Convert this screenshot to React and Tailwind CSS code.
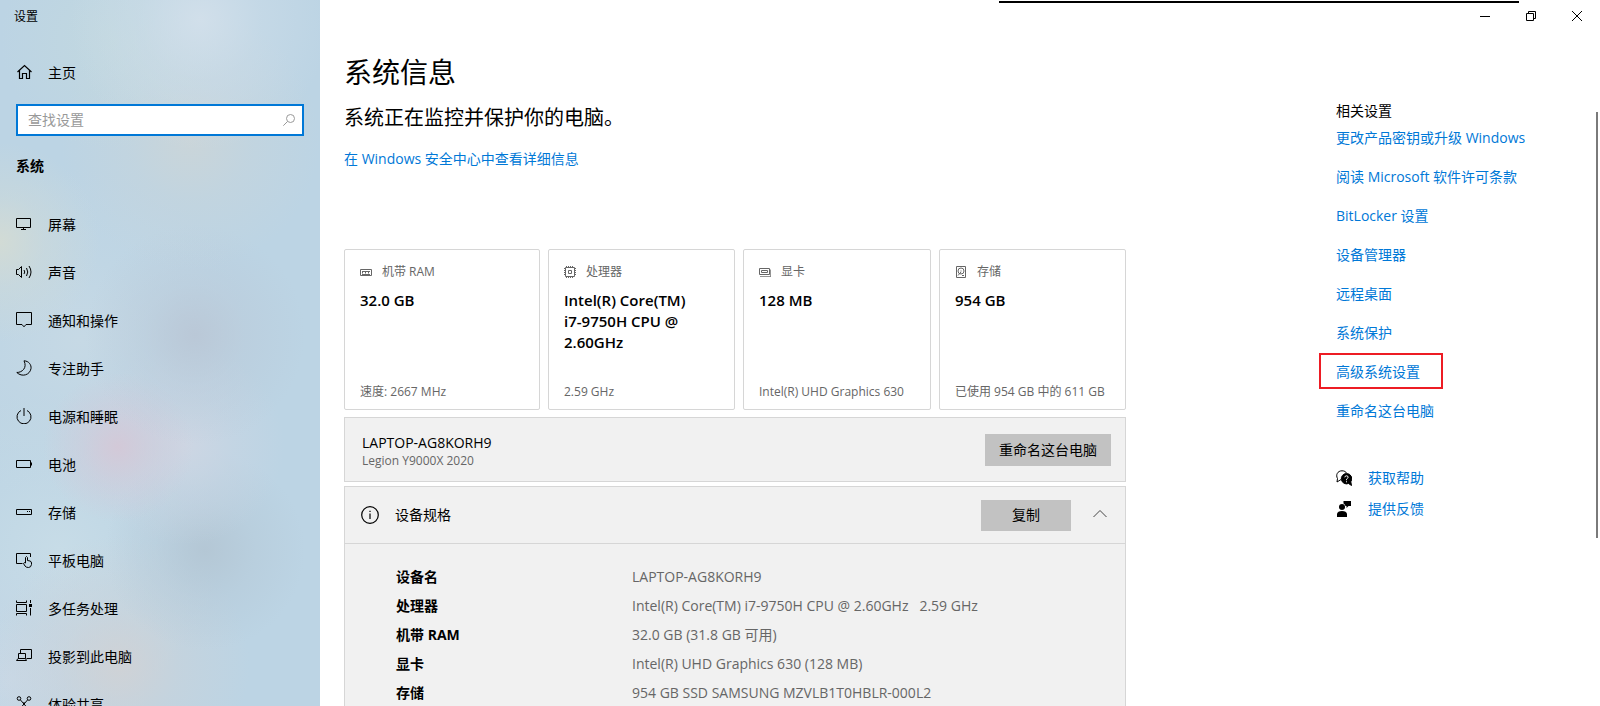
const navItems = [
  { label: "屏幕", icon: DisplayIcon },
  { label: "声音", icon: SoundIcon },
  { label: "通知和操作", icon: NoticeIcon },
  { label: "专注助手", icon: MoonIcon },
  { label: "电源和睡眠", icon: PowerIcon },
  { label: "电池", icon: BatteryIcon },
  { label: "存储", icon: StorageIcon },
  { label: "平板电脑", icon: TabletIcon },
  { label: "多任务处理", icon: MultitaskIcon },
  { label: "投影到此电脑", icon: ProjectIcon },
  { label: "体验共享", icon: ShareIcon },
];

const cards = [
  { title: "机带 RAM", value: "32.0 GB", note: "速度: 2667 MHz", icon: RamIcon },
  { title: "处理器", value: "Intel(R) Core(TM)\ni7-9750H CPU @\n2.60GHz", note: "2.59 GHz", icon: CpuIcon },
  { title: "显卡", value: "128 MB", note: "Intel(R) UHD Graphics 630", icon: GpuIcon },
  { title: "存储", value: "954 GB", note: "已使用 954 GB 中的 611 GB", icon: DiskIcon },
];

const specs = [
  ["设备名", "LAPTOP-AG8KORH9"],
  ["处理器", "Intel(R) Core(TM) i7-9750H CPU @ 2.60GHz   2.59 GHz"],
  ["机带 RAM", "32.0 GB (31.8 GB 可用)"],
  ["显卡", "Intel(R) UHD Graphics 630 (128 MB)"],
  ["存储", "954 GB SSD SAMSUNG MZVLB1T0HBLR-000L2"],
];

const related = [
  "更改产品密钥或升级 Windows",
  "阅读 Microsoft 软件许可条款",
  "BitLocker 设置",
  "设备管理器",
  "远程桌面",
  "系统保护",
  "高级系统设置",
  "重命名这台电脑",
];

function Icon({ children, size = "size-4", box = "0 0 16 16" }) {
  return (
    <svg viewBox={box} className={`${size} shrink-0`} fill="none" stroke="currentColor" strokeWidth="1" aria-hidden="true">
      {children}
    </svg>
  );
}

function HomeIcon() {
  return (
    <Icon>
      <path d="M1.5 8 L8.5 1.5 L15.5 8 M3.5 6.5 V14.5 H6.5 V9.5 H10.5 V14.5 H13.5 V6.5" strokeWidth="1.2" />
    </Icon>
  );
}

function DisplayIcon() {
  return (
    <Icon>
      <path d="M.5 2.5 H14.5 V11.5 H.5 Z M7.5 11.5 V13.5 M5 13.5 H10" />
    </Icon>
  );
}

function SoundIcon() {
  return (
    <Icon>
      <path d="M.5 5.5 H2.5 L5.5 2.5 V13.5 L2.5 10.5 H.5 Z" />
      <path d="M8 6 Q9.5 8 8 10 M10.5 4 Q13 8 10.5 12 M13 2 Q17 8 13 14" />
    </Icon>
  );
}

function NoticeIcon() {
  return (
    <Icon>
      <path d="M.5 .5 H15.5 V12.5 H10 L8 14.8 L6 12.5 H.5 Z" />
    </Icon>
  );
}

function MoonIcon() {
  return (
    <Icon>
      <path d="M8 .8 C13 1 15.5 5 15 8.5 C14 15 6 17.5 .8 12.5 C6 12.5 11.5 8 8 .8 Z" />
    </Icon>
  );
}

function PowerIcon() {
  return (
    <Icon>
      <path d="M8 0 V8 M5 2.5 A7 7 0 1 0 11 2.5" />
    </Icon>
  );
}

function BatteryIcon() {
  return (
    <Icon>
      <path d="M.5 4.5 H14.5 V11.5 H.5 Z M15.5 6.5 V9.5" />
    </Icon>
  );
}

function StorageIcon() {
  return (
    <Icon>
      <path d="M.5 5.5 H15.5 V10.5 H.5 Z M11 7.5 H12 M13 7.5 H14" />
    </Icon>
  );
}

function TabletIcon() {
  return (
    <Icon>
      <path d="M6.5 11.5 H.5 V1.5 H14.5 V5" />
      <path d="M9.5 11 V5.5 Q10.5 3.5 11.5 5.5 V8.5 L14 9 Q15.5 9.5 15.5 11 V12.5 Q15 15.5 12.5 15.5 Q10 15.5 9 14 L7.5 11.5 Q8 10 9.5 11 Z" />
    </Icon>
  );
}

function MultitaskIcon() {
  return (
    <Icon>
      <path d="M.5 4.5 H10.5 V11.5 H.5 Z M.5 .5 V2.5 H10.5 V.5 M.5 15.5 V13.5 H10.5 V15.5 M14.5 0 V3 M14.5 8 V15.5" />
      <path d="M13 5.5 H16" strokeWidth="3" />
    </Icon>
  );
}

function ProjectIcon() {
  return (
    <Icon>
      <path d="M4.5 5 V1.5 H15.5 V10.5 H10.5 M2.5 10.5 V5.5 H9.5 V10.5 M.5 12.5 L2 10.5 H9.5 L10.5 12.5 Z" />
    </Icon>
  );
}

function ShareIcon() {
  return (
    <Icon>
      <path d="M4.5 4 L11 11.5 M11.5 4 L5 11.5" />
      <circle cx="3" cy="2.5" r="1.8" />
      <circle cx="13" cy="2.5" r="1.8" />
      <circle cx="3" cy="13" r="1.8" />
      <circle cx="13" cy="13" r="1.8" />
      <path d="M7 7.5 H9" strokeWidth="2" />
    </Icon>
  );
}

function SearchIcon() {
  return (
    <Icon size="size-3" box="0 0 12 12">
      <circle cx="7.5" cy="4.5" r="4" />
      <path d="M4.5 7.5 L.3 11.7" />
    </Icon>
  );
}

function RamIcon() {
  return (
    <Icon size="size-3" box="0 0 12 12">
      <path d="M.5 3.5 H11.5 V9.5 H.5 Z M2 5.5 H10 M2.5 5 V7.5 M5.5 5 V7.5 M8.5 5 V7.5 M2 8.5 H10" />
    </Icon>
  );
}

function CpuIcon() {
  return (
    <Icon size="size-3" box="0 0 12 12">
      <path d="M1.5 1.5 H10.5 V10.5 H1.5 Z M4.5 4.5 H7.5 V7.5 H4.5 Z" />
      <path d="M2 .5 H10 M2 11.5 H10 M.5 2 V10 M11.5 2 V10" strokeDasharray="1 1" />
    </Icon>
  );
}

function GpuIcon() {
  return (
    <Icon size="size-3" box="0 0 12 12">
      <path d="M.5 2.5 H10.5 V8.5 H.5 Z M2.5 4.5 H8.5 V6.5 H2.5 Z" />
      <path d="M11.5 3.5 V10.5 M1 10.5 H12" strokeOpacity=".7" />
    </Icon>
  );
}

function DiskIcon() {
  return (
    <Icon size="size-3" box="0 0 12 12">
      <path d="M1.5 .5 H10.5 V11.5 H1.5 Z M3 9.5 L6 6" />
      <circle cx="6" cy="5" r="3" />
      <path d="M5.5 5 H6.5 M7 9.5 H9" />
    </Icon>
  );
}

function InfoIcon() {
  return (
    <Icon size="size-[18px]" box="0 0 18 18">
      <circle cx="9" cy="9" r="8.3" strokeWidth="1.2" />
      <path d="M9 7.5 V13 M9 4.8 V6" strokeWidth="1.2" />
    </Icon>
  );
}

function HelpIcon() {
  return (
    <Icon>
      <path d="M5 9.5 L1 12 L1.500 8.500 C-.5 5 1.5 .8 6 .8 C8.5 .8 9.8 1.8 10.5 3" />
      <path d="M10.5 3.5 A5.2 5.2 0 1 0 12.5 13.5 L15.5 15.5 L14.8 11.8 A5.2 5.2 0 0 0 10.5 3.5 Z" fill="currentColor" />
      <path d="M8.8 7.3 Q9 5.8 10.5 5.8 Q12.2 5.9 12.1 7.3 Q12 8.2 10.5 9.2 V10.2 M10.5 11.3 V12.3" stroke="white" />
    </Icon>
  );
}

function FeedbackIcon() {
  return (
    <Icon>
      <g fill="currentColor" stroke="none">
        <path d="M7.5 0 H15 V5 H12.5 L10.5 7 V5 H9.5 Q9 3 7.5 2.5 Z" />
        <circle cx="6" cy="6" r="3" />
        <path d="M1 16 V13 Q1.5 10 6 10 Q10.5 10 11 13 V16 Z" />
      </g>
    </Icon>
  );
}

function WindowButtons() {
  return (
    <div className="flex h-8 shrink-0 justify-end">
      <button aria-label="最小化" className="flex w-[46px] items-center justify-center">
        <Icon size="size-[10px]" box="0 0 10 10">
          <path d="M0 5.5 H10" />
        </Icon>
      </button>
      <button aria-label="还原" className="flex w-[46px] items-center justify-center">
        <Icon size="size-[10px]" box="0 0 10 10">
          <path d="M.5 2.5 H7.5 V9.5 H.5 Z M2.5 2.5 V.5 H9.5 V7.5 H7.5" />
        </Icon>
      </button>
      <button aria-label="关闭" className="flex w-[46px] items-center justify-center">
        <Icon size="size-[10px]" box="0 0 10 10">
          <path d="M0 0 L10 10 M10 0 L0 10" />
        </Icon>
      </button>
    </div>
  );
}

function Sidebar() {
  return (
    <aside className="w-80 shrink-0 overflow-hidden bg-[#bcd4e4] bg-[radial-gradient(circle_at_200px_20px,#d1dfea,#d1dfea66_60px,transparent_130px),radial-gradient(circle_at_110px_40px,#c5dadd99,#c5dadd55_50px,transparent_110px),radial-gradient(circle_at_190px_140px,#cad5d9,#cad5d966_60px,transparent_130px),radial-gradient(circle_at_0px_242px,#d2dbd5,#d2dbd566_45px,transparent_100px),radial-gradient(circle_at_195px_335px,#bac8d7,#bac8d766_50px,transparent_110px),radial-gradient(circle_at_118px_447px,#d3c9d8,#d3c9d877_35px,transparent_75px),radial-gradient(circle_at_185px_445px,#cdd6e3,#cdd6e366_50px,transparent_100px),radial-gradient(circle_at_205px_550px,#b4c7d5,#b4c7d566_50px,transparent_100px),radial-gradient(circle_at_120px_665px,#cfd2d6,#cfd2d666_60px,transparent_130px),radial-gradient(circle_at_10px_680px,#c8d8e6,#c8d8e666_60px,transparent_140px),radial-gradient(circle_at_80px_340px,#c6d9e5,#c6d9e566_80px,transparent_170px),radial-gradient(circle_at_60px_550px,#c7dce7,#c7dce766_80px,transparent_160px)]">
      <div className="flex h-8 items-center px-[14px] pt-0.5 text-xs">设置</div>
      <a href="#home" className="mt-5 flex h-10 items-center gap-4 px-4">
        <HomeIcon />
        <span className="pt-0.5">主页</span>
      </a>
      <label className="mx-4 mt-3 flex h-8 items-center border-2 border-[#0078d7] bg-white pr-[7px] pl-[10px] text-[#999999]">
        <input type="text" aria-label="查找设置" placeholder="查找设置" className="h-5 min-w-0 flex-1 leading-5 outline-none placeholder:text-[#999999]" />
        <SearchIcon />
      </label>
      <h2 className="mt-5 px-4 leading-5 font-bold">系统</h2>
      <nav className="mt-6">
        {navItems.map(({ label, icon: ItemIcon }) => (
          <a key={label} href="#" className="flex h-12 items-center gap-4 px-4">
            <ItemIcon />
            <span className="pt-0.5">{label}</span>
          </a>
        ))}
      </nav>
    </aside>
  );
}

function InfoCards() {
  return (
    <div className="mt-20 grid grid-cols-[196fr_187fr_188fr_187fr] gap-2">
      {cards.map(({ title, value, note, icon: CardIcon }) => (
        <div key={title} className="flex h-[161px] flex-col rounded-xs border border-[#d6d6d6] px-[15px] pt-3 pb-[7px]">
          <div className="flex h-5 items-center gap-[10px] text-xs text-[#666666]">
            <CardIcon />
            {title}
          </div>
          <div className="mt-2 text-[15px] leading-[21px] font-semibold whitespace-pre-line">{value}</div>
          <div className="mt-auto text-xs leading-5 whitespace-nowrap text-[#666666]">{note}</div>
        </div>
      ))}
    </div>
  );
}

function DeviceSpecs() {
  return (
    <section className="mt-1 border border-[#d6d6d6] bg-[#f1f1f1]">
      <div className="flex h-14 items-center pr-[18px] pl-4">
        <InfoIcon />
        <h3 className="ml-4 flex-1">设备规格</h3>
        <button className="h-[31px] w-[90px] bg-[#c2c2c2]">复制</button>
        <button aria-label="收起" className="ml-[22px] text-[#444444]">
          <Icon size="size-[14px]" box="0 0 14 14">
            <path d="M.5 9 L7 2.5 L13.5 9" />
          </Icon>
        </button>
      </div>
      <div className="border-t border-[#d6d6d6] py-[18px] pl-[51px]">
        <table className="w-full text-left">
          <tbody>
            {specs.map(([name, value]) => (
              <tr key={name} className="h-[29px]">
                <th className="w-[236px] font-bold">{name}</th>
                <td className="whitespace-pre text-[#666666]">{value}</td>
              </tr>
            ))}
          </tbody>
        </table>
      </div>
    </section>
  );
}

function RelatedSettings() {
  return (
    <aside className="w-60 shrink-0 pt-[69px]">
      <h3 className="leading-5">相关设置</h3>
      <ul className="-mt-[3px] text-[#0078d7]">
        {related.map((label) => (
          <li key={label} className="relative flex h-[39px] items-center">
            <a href="#">{label}</a>
            {label === "高级系统设置" && (
              <span className="pointer-events-none absolute top-px -left-[17px] h-9 w-[124px] border-2 border-[#ed1c24]" />
            )}
          </li>
        ))}
      </ul>
      <div className="mt-8 text-[#0078d7]">
        <a href="#" className="flex h-[31px] items-center gap-4">
          <span className="text-black"><HelpIcon /></span>
          获取帮助
        </a>
        <a href="#" className="flex h-[31px] items-center gap-4">
          <span className="text-black"><FeedbackIcon /></span>
          提供反馈
        </a>
      </div>
    </aside>
  );
}

export default function App() {
  return (
    <div className="flex h-screen overflow-hidden bg-white font-['Open_Sans','Noto_Sans_CJK_SC',sans-serif] text-sm text-black">
      <Sidebar />
      <div className="relative flex min-w-0 flex-1 flex-col">
        <div className="absolute top-px right-[81px] h-[2px] w-[520px] bg-black" />
        <WindowButtons />
        <div className="flex flex-1 justify-between gap-6 overflow-hidden px-6">
          <main className="max-w-[782px] min-w-0 flex-1 pt-5">
            <h1 className="text-[28px] leading-10">系统信息</h1>
            <p className="mt-3 text-xl leading-7">系统正在监控并保护你的电脑。</p>
            <a href="#" className="mt-[17px] block leading-5 text-[#0078d7]">在 Windows 安全中心中查看详细信息</a>
            <InfoCards />
            <section className="mt-[7px] flex h-[65px] items-center justify-between border border-[#d6d6d6] bg-[#f1f1f1] pr-[14px] pl-[17px]">
              <div className="pt-[3px]">
                <div className="leading-5">LAPTOP-AG8KORH9</div>
                <div className="text-xs text-[#666666]">Legion Y9000X 2020</div>
              </div>
              <button className="h-8 w-[126px] bg-[#c2c2c2]">重命名这台电脑</button>
            </section>
            <DeviceSpecs />
          </main>
          <RelatedSettings />
        </div>
        <div className="absolute top-28 right-[2px] h-[426px] w-[2px] bg-[#7a7a7a]" />
      </div>
    </div>
  );
}
